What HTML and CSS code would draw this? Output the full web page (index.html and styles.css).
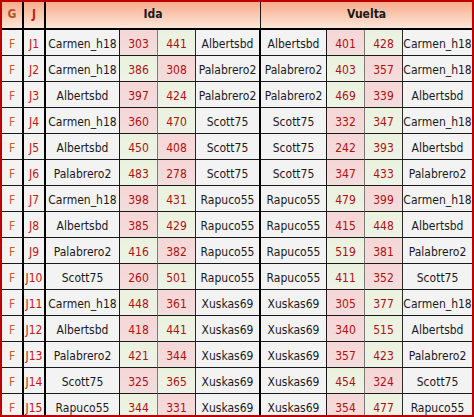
FILE: index.html
```html
<!DOCTYPE html>
<html>
<head>
<meta charset="utf-8">
<link rel="stylesheet" href="styles.css">
</head>
<body>
<div class="frame">
<table class="grid">
<colgroup>
<col class="c-g"><col class="c-j"><col class="c-n1"><col class="c-s"><col class="c-s"><col class="c-n2"><col class="c-n3"><col class="c-s"><col class="c-s"><col class="c-n4">
</colgroup>
<thead>
<tr>
<th class="hg">G</th><th class="hj">J</th><th colspan="4" class="leg">Ida</th><th colspan="4" class="leg">Vuelta</th>
</tr>
</thead>
<tbody>
<tr><td class="g">F</td><td class="j">J1</td><td class="n">Carmen_h18</td><td class="s lo">303</td><td class="s hi">441</td><td class="n">Albertsbd</td><td class="n v">Albertsbd</td><td class="s lo">401</td><td class="s hi">428</td><td class="n">Carmen_h18</td></tr>
<tr><td class="g">F</td><td class="j">J2</td><td class="n">Carmen_h18</td><td class="s hi">386</td><td class="s lo">308</td><td class="n">Palabrero2</td><td class="n v">Palabrero2</td><td class="s hi">403</td><td class="s lo">357</td><td class="n">Carmen_h18</td></tr>
<tr><td class="g">F</td><td class="j">J3</td><td class="n">Albertsbd</td><td class="s lo">397</td><td class="s hi">424</td><td class="n">Palabrero2</td><td class="n v">Palabrero2</td><td class="s hi">469</td><td class="s lo">339</td><td class="n">Albertsbd</td></tr>
<tr><td class="g">F</td><td class="j">J4</td><td class="n">Carmen_h18</td><td class="s lo">360</td><td class="s hi">470</td><td class="n">Scott75</td><td class="n v">Scott75</td><td class="s lo">332</td><td class="s hi">347</td><td class="n">Carmen_h18</td></tr>
<tr><td class="g">F</td><td class="j">J5</td><td class="n">Albertsbd</td><td class="s hi">450</td><td class="s lo">408</td><td class="n">Scott75</td><td class="n v">Scott75</td><td class="s lo">242</td><td class="s hi">393</td><td class="n">Albertsbd</td></tr>
<tr><td class="g">F</td><td class="j">J6</td><td class="n">Palabrero2</td><td class="s hi">483</td><td class="s lo">278</td><td class="n">Scott75</td><td class="n v">Scott75</td><td class="s lo">347</td><td class="s hi">433</td><td class="n">Palabrero2</td></tr>
<tr><td class="g">F</td><td class="j">J7</td><td class="n">Carmen_h18</td><td class="s lo">398</td><td class="s hi">431</td><td class="n">Rapuco55</td><td class="n v">Rapuco55</td><td class="s hi">479</td><td class="s lo">399</td><td class="n">Carmen_h18</td></tr>
<tr><td class="g">F</td><td class="j">J8</td><td class="n">Albertsbd</td><td class="s lo">385</td><td class="s hi">429</td><td class="n">Rapuco55</td><td class="n v">Rapuco55</td><td class="s lo">415</td><td class="s hi">448</td><td class="n">Albertsbd</td></tr>
<tr><td class="g">F</td><td class="j">J9</td><td class="n">Palabrero2</td><td class="s hi">416</td><td class="s lo">382</td><td class="n">Rapuco55</td><td class="n v">Rapuco55</td><td class="s hi">519</td><td class="s lo">381</td><td class="n">Palabrero2</td></tr>
<tr><td class="g">F</td><td class="j">J10</td><td class="n">Scott75</td><td class="s lo">260</td><td class="s hi">501</td><td class="n">Rapuco55</td><td class="n v">Rapuco55</td><td class="s hi">411</td><td class="s lo">352</td><td class="n">Scott75</td></tr>
<tr><td class="g">F</td><td class="j">J11</td><td class="n">Carmen_h18</td><td class="s hi">448</td><td class="s lo">361</td><td class="n">Xuskas69</td><td class="n v">Xuskas69</td><td class="s lo">305</td><td class="s hi">377</td><td class="n">Carmen_h18</td></tr>
<tr><td class="g">F</td><td class="j">J12</td><td class="n">Albertsbd</td><td class="s lo">418</td><td class="s hi">441</td><td class="n">Xuskas69</td><td class="n v">Xuskas69</td><td class="s lo">340</td><td class="s hi">515</td><td class="n">Albertsbd</td></tr>
<tr><td class="g">F</td><td class="j">J13</td><td class="n">Palabrero2</td><td class="s hi">421</td><td class="s lo">344</td><td class="n">Xuskas69</td><td class="n v">Xuskas69</td><td class="s lo">357</td><td class="s hi">423</td><td class="n">Palabrero2</td></tr>
<tr><td class="g">F</td><td class="j">J14</td><td class="n">Scott75</td><td class="s lo">325</td><td class="s hi">365</td><td class="n">Xuskas69</td><td class="n v">Xuskas69</td><td class="s hi">454</td><td class="s lo">324</td><td class="n">Scott75</td></tr>
<tr><td class="g">F</td><td class="j">J15</td><td class="n">Rapuco55</td><td class="s hi">344</td><td class="s lo">331</td><td class="n">Xuskas69</td><td class="n v">Xuskas69</td><td class="s lo">354</td><td class="s hi">477</td><td class="n">Rapuco55</td></tr>
</tbody>
</table>
</div>
</body>
</html>
```

FILE: styles.css
```css
html, body {
  margin: 0;
  padding: 0;
  background: #ffffff;
}

.frame {
  width: 474px;
  height: 417px;
  box-sizing: border-box;
  border: 2px solid #c00000;
  overflow: hidden;
}

.grid {
  width: 470px;
  table-layout: fixed;
  border-collapse: separate;
  border-spacing: 0;
  font-family: "DejaVu Sans Condensed", "DejaVu Sans", sans-serif;
  font-size: 12px;
  color: #1a1a1a;
}

.c-g { width: 22px; }
.c-j { width: 22px; }
.c-n1 { width: 74px; }
.c-s { width: 38px; }
.c-n2 { width: 65px; }
.c-n3 { width: 66px; }
.c-n4 { width: 69px; }

.grid th,
.grid td {
  text-align: center;
  white-space: nowrap;
  overflow: hidden;
  border-right: 1px solid #1a1a1a;
  border-bottom: 1px solid #1a1a1a;
}

.grid th {
  height: 23px;
  padding: 0 0 3px;
  background: linear-gradient(#f8ac8c, #fde6d8);
  font-weight: bold;
  border-bottom: 2px solid #000;
}

.grid th:last-child,
.grid td:last-child {
  border-right: none;
}

.grid .hg { color: #b4562c; border-right: 2px solid #000; }
.grid .hj { color: #d01818; border-right: 2px solid #000; }
.grid .leg { color: #1a1a1a; }
.grid .leg:first-of-type { border-right: 2px solid #000; }

.grid td {
  height: 23px;
  padding: 2px 0 0;
  background: #f3f3f3;
}

.grid .g { color: #c85a28; border-right: 2px solid #000; }
.grid .j { color: #c81414; border-right: 2px solid #000; }
.grid .s { color: #b01010; border-right-color: #2a2a2a; }
.grid td.s:nth-child(4),
.grid td.s:nth-child(8) { border-right-color: #7a7a7a; }
.grid .n { border-right-color: #1a1a1a; }
.grid td.n:nth-child(6) { border-right: 2px solid #000; }
.grid .lo { background: linear-gradient(#f6d6d6, #f3dddd); }
.grid .hi { background: linear-gradient(#eaf2de, #eef3e6); }
```
